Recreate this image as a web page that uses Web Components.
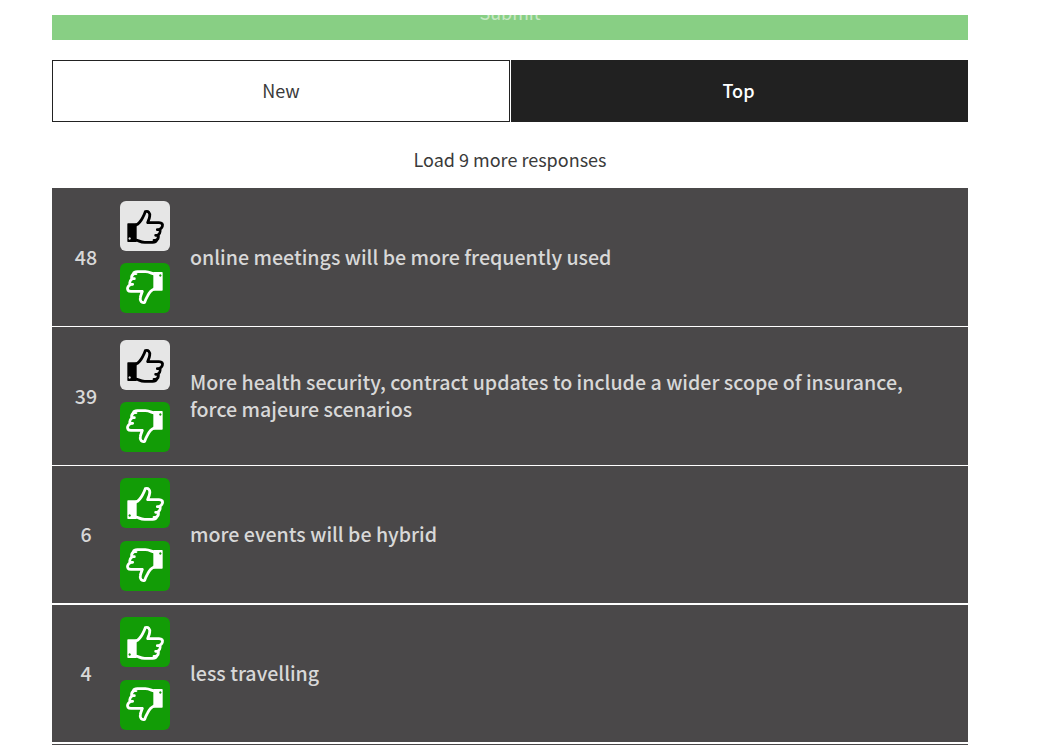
<!DOCTYPE html>
<html lang="en"><head><meta charset="utf-8"><title>Responses</title>
<style>
html,body{margin:0;padding:0;background:#fff;height:745px;overflow:hidden}
body{font-family:"Noto Sans CJK SC","Noto Sans",sans-serif;color:#333}
</style></head><body>
<response-page>
  <submit-bar>Submit</submit-bar>
  <sort-tabs></sort-tabs>
  <load-more>Load 9 more responses</load-more>
  <response-row count="48" up-active>online meetings will be more frequently used</response-row>
  <response-row count="39" up-active>More health security, contract updates to include a wider scope of insurance, force majeure scenarios</response-row>
  <response-row count="6" tight>more events will be hybrid</response-row>
  <response-row count="4" tight>less travelling</response-row>
  <list-end></list-end>
</response-page>
<template id="thumb"><svg viewBox="0 0 150 150" width="50" height="50" aria-hidden="true"><path fill="currentColor" fill-rule="evenodd" d="M24 67h26v56H24a2 2 0 0 1-2-2V69a2 2 0 0 1 2-2zM29 109a3.500 3.500 0 1 0 .01 0z"/><path fill="none" stroke="currentColor" stroke-width="8.500" stroke-linejoin="round" stroke-linecap="round" d="M48 72C58 68 63 60 68 50C72 43 74 38 76 32C85 29 91 36 89 46C88 54 85 58 83 65L117 65C126 65 129 70 127 76C125 82 121 85 116 86L112 86M120 86C122 92 118 100 113 103L107 103M115 103C116 110 112 116 108 118L102 118M110 118C108 123 104 124 98 124L74 124C62 124 56 119 48 117"/></svg></template>
<script>
function def(name, css, html, init){
  customElements.define(name, class extends HTMLElement{
    connectedCallback(){
      if(this.shadowRoot) return;
      const r=this.attachShadow({mode:'open'});
      r.innerHTML='<style>'+css+'</style>'+html;
      if(init) init.call(this,r);
    }
  });
}
def('response-page',':host{display:flex;flex-direction:column;margin:15px 83px 0 52px}','<slot></slot>');
def('submit-bar',':host{display:block;height:25px;overflow:hidden;background:#88cf84;color:#c7e8c4;text-align:center;font-size:18px}div{margin-top:-15px;line-height:25px}','<div><slot></slot></div>');
def('sort-tabs',':host{display:flex;gap:1px;margin-top:20px;height:62px;font-size:18px}div{display:flex;align-items:center;justify-content:center;box-sizing:border-box;padding-bottom:3px}.n{flex:none;width:458px;border:1px solid #222;color:#3a3a3a;background:#fff}.t{flex:1;background:#212121;color:#fff;font-weight:500;padding-right:2px}','<div class="n">New</div><div class="t">Top</div>');
def('load-more',':host{display:block;text-align:center;font-size:18px;line-height:27px;margin:24px 0 15px;color:#3a3a3a}','<slot></slot>');
def('list-end',':host{display:block;height:10px;background:#4a4849}','');
def('vote-button',':host{display:flex;align-items:center;justify-content:center;width:50px;height:50px;border-radius:6px;background:#129c06;color:#fff}:host([active]){background:#e6e6e6;color:#000}:host([down]) svg{transform:rotate(180deg)}','',function(r){r.appendChild(document.getElementById('thumb').content.cloneNode(true));});
def('response-row',':host{display:flex;align-items:center;box-sizing:border-box;height:139px;background:#4a4849;color:#d8d8d8;border-bottom:1px solid #fff;font-size:19.6px;font-weight:500;line-height:27px}:host([tight]){border-bottom-width:2px}:host([tight]) .v{gap:13px}.c{width:68px;text-align:center;padding-bottom:2px}.v{display:flex;flex-direction:column;gap:12px;margin-right:20px}.t{flex:1;padding:0 40px 2px 0}','<div class="c"></div><div class="v"><vote-button class="u"></vote-button><vote-button class="d" down></vote-button></div><div class="t"><slot></slot></div>',function(r){r.querySelector('.c').textContent=this.getAttribute('count');if(this.hasAttribute('up-active'))r.querySelector('.u').setAttribute('active','');});
</script>
</body></html>
